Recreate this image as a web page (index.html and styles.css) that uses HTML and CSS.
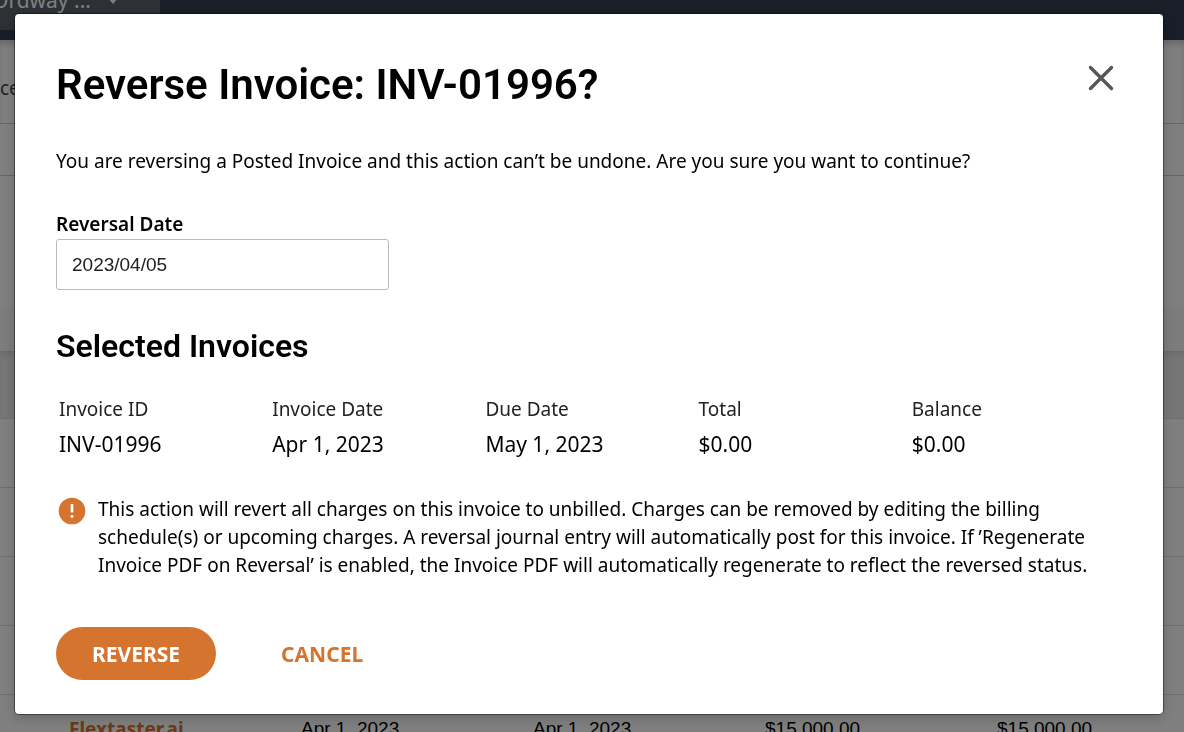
FILE: index.html
```html
<!DOCTYPE html>
<html lang="en">
<head>
  <meta charset="UTF-8" />
  <meta name="viewport" content="width=device-width, initial-scale=1.0"/>
  <title>Reverse Invoice</title>
  <link rel="stylesheet" href="styles.css">
</head>
<body>

  <!-- page behind the dialog -->
  <div class="page">
    <header class="topbar">
      <div class="company">Ordway ...
        <svg width="12" height="8" viewBox="0 0 12 8"><path d="M0 1h12L6 8z" fill="currentColor"/></svg>
      </div>
    </header>
    <div class="crumbs">ce</div>
    <div class="toolbar"></div>
    <div class="summary"></div>
    <div class="summary-foot"></div>
    <table class="list">
      <thead>
        <tr><th></th><th></th><th></th><th></th><th></th></tr>
      </thead>
      <tbody>
        <tr><td></td><td></td><td></td><td></td><td></td></tr>
        <tr><td></td><td></td><td></td><td></td><td></td></tr>
        <tr><td></td><td></td><td></td><td></td><td></td></tr>
        <tr><td></td><td></td><td></td><td></td><td></td></tr>
        <tr>
          <td><a href="#">Flextaster.ai</a></td>
          <td>Apr 1, 2023</td>
          <td>Apr 1, 2023</td>
          <td>$15,000.00</td>
          <td>$15,000.00</td>
        </tr>
      </tbody>
    </table>
  </div>

  <div class="overlay">
    <form class="modal" role="dialog" aria-labelledby="title">
      <div class="modal-header">
        <h1 id="title">Reverse Invoice: INV-01996?</h1>
        <button type="button" class="close" aria-label="Close">
          <svg width="26" height="26" viewBox="0 0 26 26"><path d="M2.5 2.5l21 21M23.5 2.5l-21 21" fill="none" stroke="#545659" stroke-width="3.4" stroke-linecap="round"/></svg>
        </button>
      </div>

      <p class="intro">You are reversing a Posted Invoice and this action can’t be undone. Are you sure you want to continue?</p>

      <div class="field">
        <label for="reversal-date">Reversal Date</label>
        <input type="text" id="reversal-date" value="2023/04/05">
      </div>

      <h2>Selected Invoices</h2>
      <table class="invoices">
        <thead>
          <tr>
            <th>Invoice ID</th>
            <th>Invoice Date</th>
            <th>Due Date</th>
            <th>Total</th>
            <th>Balance</th>
          </tr>
        </thead>
        <tbody>
          <tr>
            <td>INV-01996</td>
            <td>Apr 1, 2023</td>
            <td>May 1, 2023</td>
            <td>$0.00</td>
            <td>$0.00</td>
          </tr>
        </tbody>
      </table>

      <div class="warning">
        <svg width="28" height="28" viewBox="0 0 28 28">
          <circle cx="14" cy="14" r="13.3" fill="#d5742f"/>
          <path d="M12.7 7h2.6v8.6h-2.6zM12.7 18h2.6v2.8h-2.6z" fill="#fff"/>
        </svg>
        <p>This action will revert all charges on this invoice to unbilled. Charges can be removed by editing the billing schedule(s) or upcoming charges. A reversal journal entry will automatically post for this invoice. If ’Regenerate Invoice PDF on Reversal’ is enabled, the Invoice PDF will automatically regenerate to reflect the reversed status.</p>
      </div>

      <div class="actions">
        <button type="submit" class="btn btn-primary">REVERSE</button>
        <button type="button" class="btn btn-link">CANCEL</button>
      </div>
    </form>
  </div>

</body>
</html>
```
FILE: styles.css
```css
* {
  box-sizing: border-box;
}
body {
  margin: 0;
  font-family: "Noto Sans", sans-serif;
  font-size: 19px;
  color: #000;
  background-color: #fff;
}

/* page behind the dialog */
.page {
  height: 100vh;
  overflow: hidden;
}
.topbar {
  height: 40px;
  overflow: hidden;
  background-color: #303e52;
}
.company {
  display: flex;
  align-items: center;
  gap: 16px;
  width: 168px;
  height: 60px;
  margin: -30px 0 0 -8px;
  border-radius: 6px;
  background-color: #5a6068;
  color: #fff;
  font-size: 21px;
}
.crumbs {
  height: 84px;
  padding-top: 35px;
  color: #444;
  border-bottom: 1px solid #ccc;
  box-shadow: inset 0 6px 8px -4px #bbb;
}
.toolbar {
  height: 52px;
  border-bottom: 1px solid #ccc;
}
.summary {
  height: 131px;
}
.summary-foot {
  height: 44px;
  background-color: #f8f8fa;
}
.list {
  width: 100%;
  table-layout: fixed;
  border-collapse: collapse;
  font-family: "Liberation Sans", Arial, sans-serif;
}
.list th {
  width: 232px;
  height: 67px;
  background-color: #ececec;
  border-bottom: 1px solid #ddd;
  box-shadow: inset 0 8px 6px -6px #ccc;
}
.list th:last-child {
  width: auto;
}
.list td {
  height: 69px;
  padding: 0 0 0 69px;
  border-bottom: 1px solid #ddd;
}
.list a {
  color: #d5742f;
  font-family: "Noto Sans", sans-serif;
  font-weight: bold;
  text-decoration: none;
}

/* dialog */
.overlay {
  position: fixed;
  inset: 0;
  padding: 14px 21px 18px 15px;
  background-color: rgba(0, 0, 0, 0.5);
}
.modal {
  min-height: 100%;
  padding: 41px 41px 34px;
  border-radius: 4px;
  background-color: #fff;
  box-shadow: 0 0 0 1px rgba(0, 0, 0, 0.4), 0 4px 12px rgba(0, 0, 0, 0.2);
}
.modal-header {
  display: flex;
  justify-content: space-between;
  align-items: flex-start;
}
h1,
h2 {
  margin: 0;
  font-family: Roboto, sans-serif;
  font-weight: 600;
}
h1 {
  font-size: 42px;
  line-height: 60px;
}
h2 {
  margin: 36px 0 26px;
  font-size: 32px;
  line-height: 40px;
}
button {
  border: none;
  background: none;
  font-family: inherit;
  cursor: pointer;
}
.close {
  display: flex;
  padding: 8px;
  margin-top: 2px;
}
.intro {
  margin: 31px 0 34px;
  line-height: 30px;
}
.field {
  display: flex;
  flex-direction: column;
  gap: 1px;
}
.field label {
  font-weight: 600;
  line-height: 28px;
}
.field input {
  width: 333px;
  max-width: 100%;
  height: 51px;
  padding: 0 15px;
  border: 1px solid #bbb;
  border-radius: 3px;
  background-color: #fff;
  color: #222;
  font-family: "Liberation Sans", Arial, sans-serif;
  font-size: 19px;
}
.invoices {
  width: 100%;
  table-layout: fixed;
  border-collapse: collapse;
}
.invoices th,
.invoices td {
  padding: 0 0 0 3px;
  line-height: 35px;
  text-align: left;
}
.invoices th {
  color: #222;
  font-weight: 400;
}
.invoices td {
  font-size: 21px;
}
.warning {
  display: flex;
  gap: 12px;
  margin-top: 33px;
  padding: 0 20px 0 2px;
}
.warning svg {
  flex: none;
  margin-top: 2px;
}
.warning p {
  margin: 0;
  line-height: 28px;
}
.actions {
  display: flex;
  gap: 29px;
  margin-top: 48px;
}
.btn {
  height: 53px;
  padding: 0 36px;
  border-radius: 27px;
  font-size: 21px;
  font-weight: 700;
}
.btn-primary {
  background-color: #d5742f;
  color: #fff;
}
.btn-link {
  color: #d5742f;
}
```
